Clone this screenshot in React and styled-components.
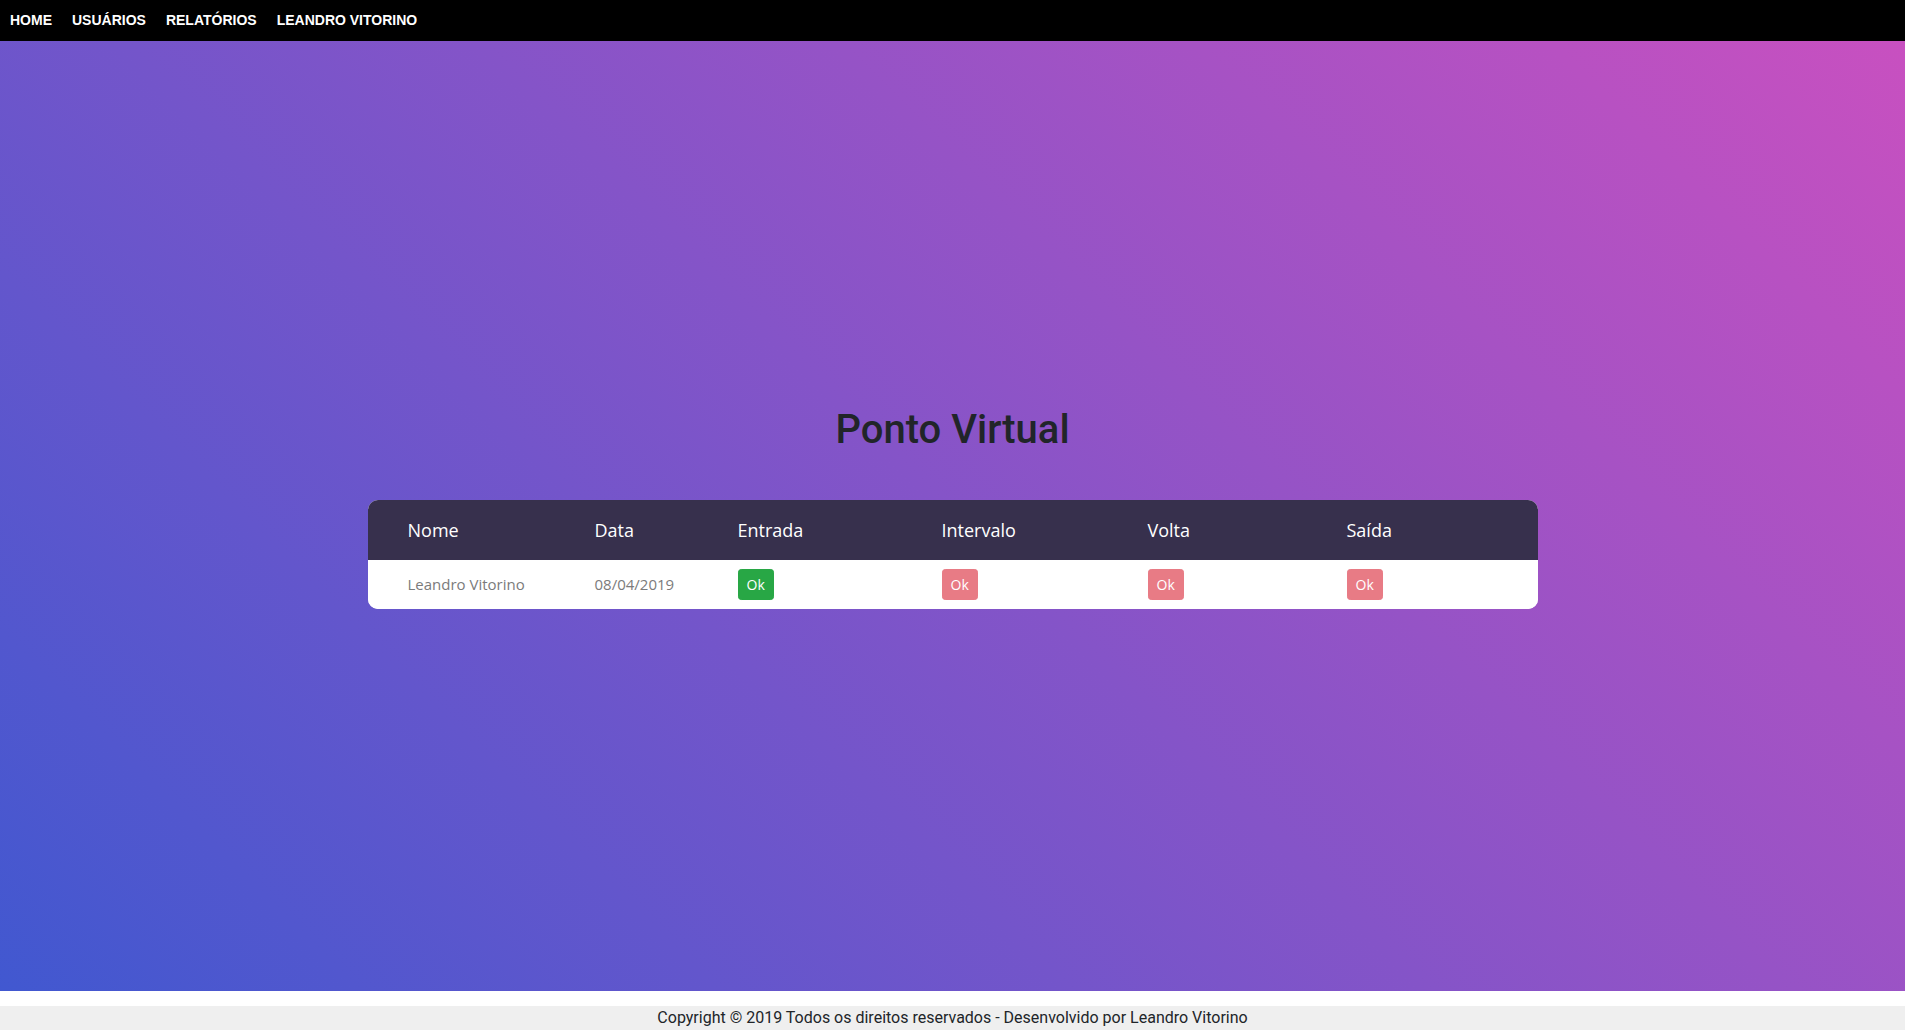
import React from "react";
import styled, { createGlobalStyle } from "styled-components";

const GlobalStyle = createGlobalStyle`
  * {
    box-sizing: border-box;
  }
  html,
  body {
    margin: 0;
    padding: 0;
    background: #fff;
  }
  body {
    font-family: Roboto, "Liberation Sans", sans-serif;
  }
`;

const Page = styled.div`
  display: flex;
  flex-direction: column;
  min-height: 100vh;
`;

const NavBar = styled.nav`
  display: flex;
  align-items: center;
  gap: 20px;
  height: 41px;
  padding: 0 0 2px 10px;
  background: #000;
`;

const NavLink = styled.a`
  font-family: "Liberation Sans", Arial, sans-serif;
  font-size: 14px;
  font-weight: 700;
  color: #fff;
  text-transform: uppercase;
  text-decoration: none;
  cursor: pointer;
`;

const Hero = styled.main`
  display: flex;
  flex-direction: column;
  align-items: center;
  justify-content: center;
  height: 950px;
  padding-bottom: 18px;
  background: linear-gradient(45deg, #4158d0, #c850c0);
`;

const Title = styled.h1`
  margin: 1px 0 46px;
  font-family: Roboto, "Liberation Sans", sans-serif;
  font-size: 40px;
  font-weight: 500;
  line-height: 48px;
  color: #212529;
`;

const Table = styled.div`
  width: 1170px;
  border-radius: 10px;
  overflow: hidden;
  background: #fff;
`;

const Row = styled.div`
  display: grid;
  grid-template-columns: 187px 143px 204px 206px 199px 1fr;
  align-items: center;
  height: ${(p) => (p.$head ? "60px" : "49px")};
  background: ${(p) => (p.$head ? "#37304d" : "#fff")};
`;

const Cell = styled.div`
  padding-left: 40px;
  font-family: "Open Sans", "Liberation Sans", sans-serif;
  font-size: ${(p) => (p.$head ? "18px" : "15px")};
  line-height: 1.5;
  color: ${(p) => (p.$head ? "#fff" : "#7b7b7b")};
`;

const OkButton = styled.button`
  display: inline-block;
  height: 31px;
  padding: 4px 8px;
  border: 1px solid ${(p) => (p.$done ? "#28a745" : "#dc3545")};
  border-radius: 3.2px;
  background: ${(p) => (p.$done ? "#28a745" : "#dc3545")};
  opacity: ${(p) => (p.$done ? 1 : 0.65)};
  font-family: "Open Sans", "Liberation Sans", sans-serif;
  font-size: 14px;
  line-height: 21px;
  color: #fff;
  cursor: ${(p) => (p.$done ? "pointer" : "default")};
`;

const Spacer = styled.div`
  height: 15px;
  background: #fff;
`;

const Footer = styled.footer`
  height: 24px;
  background: #efefef;
  font-family: Roboto, "Liberation Sans", sans-serif;
  font-size: 16px;
  line-height: 24px;
  text-align: center;
  color: #212529;
`;

const columns = ["Nome", "Data", "Entrada", "Intervalo", "Volta", "Saída"];

const registros = [
  {
    nome: "Leandro Vitorino",
    data: "08/04/2019",
    pontos: [true, false, false, false],
  },
];

export default function App() {
  return (
    <Page>
      <GlobalStyle />
      <NavBar>
        <NavLink>Home</NavLink>
        <NavLink>Usuários</NavLink>
        <NavLink>Relatórios</NavLink>
        <NavLink>Leandro Vitorino</NavLink>
      </NavBar>
      <Hero>
        <Title>Ponto Virtual</Title>
        <Table>
          <Row $head>
            {columns.map((c) => (
              <Cell $head key={c}>
                {c}
              </Cell>
            ))}
          </Row>
          {registros.map((r) => (
            <Row key={r.nome + r.data}>
              <Cell>{r.nome}</Cell>
              <Cell>{r.data}</Cell>
              {r.pontos.map((done, i) => (
                <Cell key={i}>
                  <OkButton $done={done} disabled={!done}>
                    Ok
                  </OkButton>
                </Cell>
              ))}
            </Row>
          ))}
        </Table>
      </Hero>
      <Spacer />
      <Footer>
        Copyright © 2019 Todos os direitos reservados - Desenvolvido por Leandro Vitorino
      </Footer>
    </Page>
  );
}
